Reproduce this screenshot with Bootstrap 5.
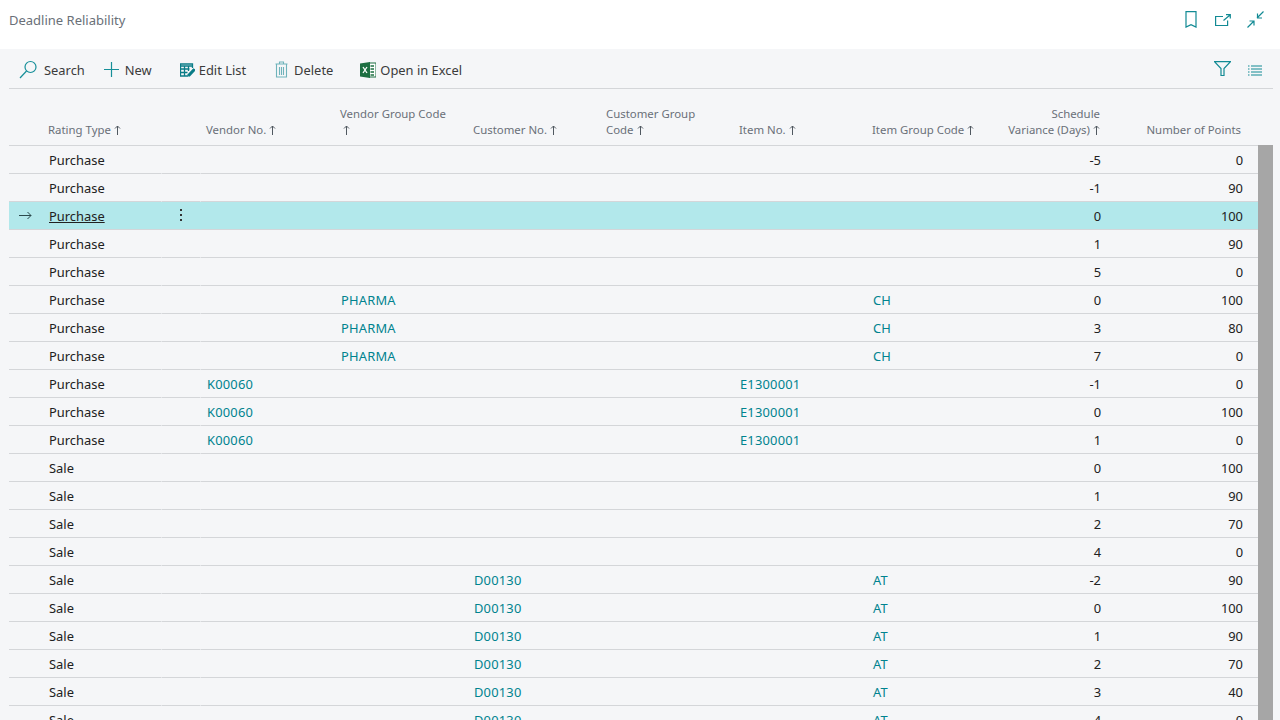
<!DOCTYPE html>
<html lang="en"><head><meta charset="utf-8"><title>Deadline Reliability</title>
<link href="https://cdn.jsdelivr.net/npm/bootstrap@5.3.0/dist/css/bootstrap.min.css" rel="stylesheet">
<style>
html,body{height:720px;overflow:hidden}
body{background:#f5f6f8;font-family:"Noto Sans","Open Sans","Liberation Sans",sans-serif;font-size:12.9px;color:#212121}
.bc-top{height:49px;background:#fff;padding:11px 16px 0 9px}
.bc-title{font-size:13px;line-height:18px;color:#6a7078}
.bc-bar{height:40px;margin:0 7px 0 9px;border-bottom:1px solid #d4d6d9;padding:0 11px 0 10px}
.bc-act{display:flex;align-items:center;gap:6px;color:#3b3b3b;white-space:nowrap;margin-top:2px;line-height:18px}
.bc-gap18{margin-left:18px}
.bc-gap16{margin-left:16px}
.bc-wrap{height:631px;overflow:hidden;margin-right:7px}
.bc-left{margin-left:9px;width:1249px;flex:none}
.bc-scroll{width:15px;background:#a6a6a6;margin-top:56px;flex:none}
.bc-tab{table-layout:fixed;width:1249px;border-collapse:separate;border-spacing:0}
.bc-tab th{height:57px;vertical-align:bottom;font-weight:400;font-size:11.4px;line-height:16px;color:#6a7078;padding:0 7px 7px 6px;border-bottom:1px solid #d4d6d9}
.bc-tab th.rate,.bc-tab th.cg{padding-left:7px}
.bc-tab td{height:28px;padding:1px 7px 0;border-bottom:1px solid #d4d6d9;white-space:nowrap;line-height:26px;vertical-align:middle}
.bc-tab td.rate{padding-left:8px}
.bc-tab .num{text-align:right}
.bc-tab th.num{padding-right:8px}
.bc-tab td.lastn{padding-right:15px}
.bc-tab th.lastn{padding-right:17px}
.bc-tab td.pad0{padding:0}
.bc-tab td.gapl{border-left:1px solid transparent;padding-left:6px}
.bc-tab td.gapl.pad0{padding:0}
.bc-tab a{color:#00838f;text-decoration:none;letter-spacing:.2px}
.bc-tab tr.sel a{color:#212121;text-decoration:underline;letter-spacing:0}
.bc-tab tr.sel td{background:#b2e8eb}
svg{display:block;flex:none}
svg.bc-up{display:inline-block;vertical-align:-1px;margin-left:3px}
</style></head><body>
<svg width="0" height="0" class="position-absolute"><defs><symbol id="u" viewBox="0 0 7 10"><path d="M3.500 10V1M1 3.500L3.500 1 6 3.500" fill="none" stroke="#505860"/></symbol></defs></svg>
<div class="bc-top d-flex align-items-start justify-content-between">
  <div class="bc-title">Deadline Reliability</div>
  <div class="d-flex align-items-center">
    <svg width="12" height="17" viewBox="0 0 12 17" fill="none" stroke="#128a94" stroke-width="1.2"><path d="M1 .6h10v15.500l-5-2.500-5 2.500z"/></svg>
    <svg class="bc-gap18" width="16" height="12" viewBox="0 0 16 12" fill="none" stroke="#128a94" stroke-width="1.2"><path d="M8 2.500H.6v9h12V6.500M8.500 6.500L15 1M11 .7h4.300V4.500"/></svg>
    <svg class="bc-gap16" width="17" height="17" viewBox="0 0 17 17" fill="none" stroke="#128a94" stroke-width="1.2"><path d="M16.500.5l-6.500 6.500M10.500 2.500v4.500h4.500M.5 16.500l6.500-6.500M2.500 10h4.500v4.500"/></svg>
  </div>
</div>
<div class="bc-bar d-flex align-items-center justify-content-between">
  <div class="d-flex align-items-center">
    <div class="bc-act"><svg width="19" height="19" viewBox="0 0 19 19" fill="none" stroke="#168f99" stroke-width="1.2"><circle cx="11.500" cy="7" r="5.500"/><path d="M7.500 11L1 18"/></svg><span>Search</span></div>
    <div class="bc-act" style="margin-left:19px"><svg width="15" height="15" viewBox="0 0 15 15" fill="none" stroke="#168f99" stroke-width="1.2"><path d="M7.500 0v15M0 7.500h15"/></svg><span>New</span></div>
    <div class="bc-act" style="margin-left:28px"><svg width="15" height="14" viewBox="0 0 15 14" fill="none" stroke="#0a7c87" stroke-width="1.3"><path d="M.5 1h12v2h-12zM.5 1v12h8M.5 6h9M.5 9.500h7M4.500 3v10M8.500 3v5M12.500 3v2"/><path d="M8 12l5.500-6 1.500 1-5.500 6z" fill="#0a7c87"/></svg><span style="margin-left:-2px">Edit List</span></div>
    <div class="bc-act" style="margin-left:29px"><svg width="13" height="17" viewBox="0 0 13 17" fill="none" stroke="#6fb3bb" stroke-width="1.1"><path d="M.5 3h12M4.500 3V1h4v2M1.500 3v13h10V3M4.500 6v8M6.500 6v8M8.500 6v8"/></svg><span>Delete</span></div>
    <div class="bc-act" style="margin-left:27px"><svg width="16" height="16" viewBox="0 0 16 16"><path d="M9 1h7v14H9z" fill="#fff" stroke="#1d6f42"/><path d="M10.500 4H14M10.500 7H14M10.500 10H14M10.500 13H14" stroke="#1d6f42" stroke-width="1.500"/><path d="M0 1.500L10 0v16L0 14.500z" fill="#1d6f42"/><path d="M3 5l4 6M7 5l-4 6" stroke="#fff" stroke-width="1.300"/></svg><span style="margin-left:-2px">Open in Excel</span></div>
  </div>
  <div class="d-flex align-items-center" style="gap:17px">
    <svg width="17" height="15" viewBox="0 0 17 15" fill="none" stroke="#128a94" stroke-width="1.2"><path d="M.5.600h16L10 7.500V14.500H7V7.500z"/></svg>
    <svg class="mt-1" width="14" height="11" viewBox="0 0 14 11" fill="none" stroke="#128a94" stroke-width="1.100"><path d="M3 1h11M3 4h11M3 7h11M3 10h11M0 1h1.500M0 4h1.500M0 7h1.500M0 10h1.500"/></svg>
  </div>
</div>
<div class="bc-wrap d-flex">
  <div class="bc-left">
  <table class="bc-tab">
    <colgroup><col style="width:32px"><col style="width:120px"><col style="width:39px"><col style="width:134px"><col style="width:133px"><col style="width:132px"><col style="width:134px"><col style="width:133px"><col style="width:116px"><col style="width:126px"></colgroup>
    <thead><tr>
      <th></th><th class="rate">Rating Type<svg class="bc-up" width="7" height="10"><use href="#u"/></svg></th><th></th>
      <th>Vendor No.<svg class="bc-up" width="7" height="10"><use href="#u"/></svg></th>
      <th>Vendor Group Code<br><svg class="bc-up" width="7" height="10"><use href="#u"/></svg></th>
      <th>Customer No.<svg class="bc-up" width="7" height="10"><use href="#u"/></svg></th>
      <th class="cg">Customer Group<br>Code<svg class="bc-up" width="7" height="10"><use href="#u"/></svg></th>
      <th>Item No.<svg class="bc-up" width="7" height="10"><use href="#u"/></svg></th>
      <th>Item Group Code<svg class="bc-up" width="7" height="10"><use href="#u"/></svg></th>
      <th class="num">Schedule<br>Variance (Days)<svg class="bc-up" width="7" height="10"><use href="#u"/></svg></th>
      <th class="num lastn">Number of Points</th>
    </tr></thead>
    <tbody id="rows"></tbody>
  </table>
  </div>
  <div class="bc-scroll"></div>
</div>
<script>
const R=[['Purchase','','','','','',-5,0],['Purchase','','','','','',-1,90],['Purchase','','','','','',0,100],['Purchase','','','','','',1,90],['Purchase','','','','','',5,0],
['Purchase','','PHARMA','','','CH',0,100],['Purchase','','PHARMA','','','CH',3,80],['Purchase','','PHARMA','','','CH',7,0],
['Purchase','K00060','','','E1300001','',-1,0],['Purchase','K00060','','','E1300001','',0,100],['Purchase','K00060','','','E1300001','',1,0],
['Sale','','','','','',0,100],['Sale','','','','','',1,90],['Sale','','','','','',2,70],['Sale','','','','','',4,0],
['Sale','','','D00130','','AT',-2,90],['Sale','','','D00130','','AT',0,100],['Sale','','','D00130','','AT',1,90],['Sale','','','D00130','','AT',2,70],['Sale','','','D00130','','AT',3,40],['Sale','','','D00130','','AT',4,0]];
const L=v=>v?`<a href="#">${v}</a>`:'';
document.getElementById('rows').innerHTML=R.map((r,i)=>{const s=i==2;
return `<tr${s?' class="sel"':''}><td class="pad0 text-center">${s?'<svg class="mx-auto" width="13" height="9" viewBox="0 0 13 9" fill="none" stroke="#2b4a4d"><path d="M0 4.500h12M8.500 1l3.500 3.500L8.500 8"/></svg>':''}</td><td class="rate">${s?L(r[0]):r[0]}</td><td class="pad0 gapl text-center">${s?'<svg class="mx-auto" width="3" height="13" viewBox="0 0 3 13" fill="#333"><rect x="0" y="0" width="2" height="2"/><rect x="0" y="5" width="2" height="2"/><rect x="0" y="10" width="2" height="2"/></svg>':''}</td><td class="gapl">${L(r[1])}</td><td>${L(r[2])}</td><td>${L(r[3])}</td><td></td><td>${L(r[4])}</td><td>${L(r[5])}</td><td class="num">${r[6]}</td><td class="num lastn">${r[7]}</td></tr>`}).join('');
</script>
<script src="https://cdn.jsdelivr.net/npm/bootstrap@5.3.0/dist/js/bootstrap.bundle.min.js"></script>
</body></html>
